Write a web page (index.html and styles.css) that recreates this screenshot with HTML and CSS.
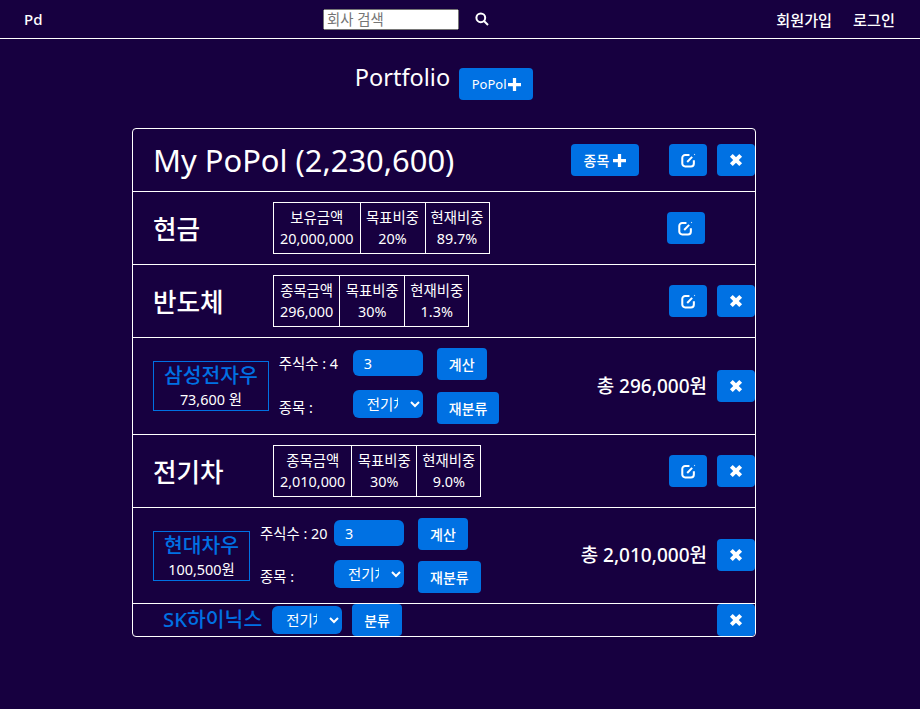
FILE: index.html
```html
<!DOCTYPE html>
<html lang="ko">
<head>
<meta charset="UTF-8">
<meta name="viewport" content="width=device-width, initial-scale=1.0">
<title>Portfolio</title>
<link rel="stylesheet" href="styles.css">
</head>
<body>
<nav class="navbar">
  <a class="brand">Pd</a>
  <form class="search">
    <input class="search-input" type="text" placeholder="회사 검색">
    <svg class="search-icon" viewBox="0 0 14 14"><circle cx="5.8" cy="5.8" r="4.4"/><path d="M9 9l4 4"/></svg>
  </form>
  <div class="nav-links">
    <a>회원가입</a>
    <a>로그인</a>
  </div>
</nav>

<div class="page-title">
  <h1>Portfolio</h1>
  <button class="btn btn-popol">PoPol<svg class="icon-plus" viewBox="0 0 12 12"><path d="M4.5 0h3v4.5H12v3H7.5V12h-3V7.5H0v-3h4.5z"/></svg></button>
</div>

<div class="card">
  <!-- portfolio header -->
  <div class="row row-top">
    <div class="popol-name">My PoPol (2,230,600)</div>
    <button class="btn btn-add">종목 <svg class="icon-plus" viewBox="0 0 12 12"><path d="M4.5 0h3v4.5H12v3H7.5V12h-3V7.5H0v-3h4.5z"/></svg></button>
    <button class="btn btn-icon btn-gap"><svg class="icon-edit" viewBox="0 0 14 14"><path d="M12 6.8v3a2.7 2.7 0 0 1-2.7 2.7H3.9a2.7 2.7 0 0 1-2.7-2.7V4.6a2.7 2.7 0 0 1 2.7-2.7h4"/><path d="M5.8 8.4l4.6-4.8"/><path class="edit-tip" d="M12.4 1.7l.5-.5"/></svg></button>
    <button class="btn btn-icon"><svg class="icon-x" viewBox="0 0 12 12"><path d="M2 2l8 8M10 2l-8 8"/></svg></button>
  </div>

  <!-- cash -->
  <div class="row row-group">
    <div class="group-name">현금</div>
    <table class="stats">
      <tr><td>보유금액<br>20,000,000</td><td>목표비중<br>20%</td><td>현재비중<br>89.7%</td></tr>
    </table>
    <button class="btn btn-icon btn-cash"><svg class="icon-edit" viewBox="0 0 14 14"><path d="M12 6.8v3a2.7 2.7 0 0 1-2.7 2.7H3.9a2.7 2.7 0 0 1-2.7-2.7V4.6a2.7 2.7 0 0 1 2.7-2.7h4"/><path d="M5.8 8.4l4.6-4.8"/><path class="edit-tip" d="M12.4 1.7l.5-.5"/></svg></button>
  </div>

  <!-- semiconductor -->
  <div class="row row-group">
    <div class="group-name">반도체</div>
    <table class="stats">
      <tr><td>종목금액<br>296,000</td><td>목표비중<br>30%</td><td>현재비중<br>1.3%</td></tr>
    </table>
    <button class="btn btn-icon btn-gap btn-push"><svg class="icon-edit" viewBox="0 0 14 14"><path d="M12 6.8v3a2.7 2.7 0 0 1-2.7 2.7H3.9a2.7 2.7 0 0 1-2.7-2.7V4.6a2.7 2.7 0 0 1 2.7-2.7h4"/><path d="M5.8 8.4l4.6-4.8"/><path class="edit-tip" d="M12.4 1.7l.5-.5"/></svg></button>
    <button class="btn btn-icon"><svg class="icon-x" viewBox="0 0 12 12"><path d="M2 2l8 8M10 2l-8 8"/></svg></button>
  </div>

  <div class="row row-stock">
    <div class="stock-box">
      <div class="stock-name">삼성전자우</div>
      <div class="stock-price">73,600 원</div>
    </div>
    <div class="stock-form">
      <span class="stock-label">주식수 : 4</span>
      <input class="field field-input" type="text" value="3">
      <button class="btn btn-text">계산</button>
      <span class="stock-label">종목 :</span>
      <select class="field field-select"><option>전기차</option></select>
      <button class="btn btn-text">재분류</button>
    </div>
    <div class="stock-total">총 296,000원</div>
    <button class="btn btn-icon"><svg class="icon-x" viewBox="0 0 12 12"><path d="M2 2l8 8M10 2l-8 8"/></svg></button>
  </div>

  <!-- EV -->
  <div class="row row-group">
    <div class="group-name">전기차</div>
    <table class="stats">
      <tr><td>종목금액<br>2,010,000</td><td>목표비중<br>30%</td><td>현재비중<br>9.0%</td></tr>
    </table>
    <button class="btn btn-icon btn-gap btn-push"><svg class="icon-edit" viewBox="0 0 14 14"><path d="M12 6.8v3a2.7 2.7 0 0 1-2.7 2.7H3.9a2.7 2.7 0 0 1-2.7-2.7V4.6a2.7 2.7 0 0 1 2.7-2.7h4"/><path d="M5.8 8.4l4.6-4.8"/><path class="edit-tip" d="M12.4 1.7l.5-.5"/></svg></button>
    <button class="btn btn-icon"><svg class="icon-x" viewBox="0 0 12 12"><path d="M2 2l8 8M10 2l-8 8"/></svg></button>
  </div>

  <div class="row row-stock row-stock-last">
    <div class="stock-box">
      <div class="stock-name">현대차우</div>
      <div class="stock-price">100,500원</div>
    </div>
    <div class="stock-form">
      <span class="stock-label">주식수 : 20</span>
      <input class="field field-input" type="text" value="3">
      <button class="btn btn-text">계산</button>
      <span class="stock-label">종목 :</span>
      <select class="field field-select"><option>전기차</option></select>
      <button class="btn btn-text">재분류</button>
    </div>
    <div class="stock-total">총 2,010,000원</div>
    <button class="btn btn-icon"><svg class="icon-x" viewBox="0 0 12 12"><path d="M2 2l8 8M10 2l-8 8"/></svg></button>
  </div>

  <!-- not classified yet -->
  <div class="row row-new">
    <div class="new-name">SK하이닉스</div>
    <select class="field field-select"><option>전기차</option></select>
    <button class="btn btn-text">분류</button>
    <button class="btn btn-icon btn-push"><svg class="icon-x" viewBox="0 0 12 12"><path d="M2 2l8 8M10 2l-8 8"/></svg></button>
  </div>
</div>
</body>
</html>
```

FILE: styles.css
```css
* {
  box-sizing: border-box;
}
body {
  margin: 0;
  background: #170040;
  color: #fff;
  font-family: "Noto Sans", "Noto Sans CJK KR", sans-serif;
  font-size: 16px;
}
.navbar {
  display: grid;
  grid-template-columns: 299px auto 1fr;
  align-items: center;
  height: 39px;
  padding: 0 25px 0 24px;
  border-bottom: 1px solid #fff;
}
.brand {
  font-size: 15px;
  font-weight: 500;
}
.search {
  display: flex;
  align-items: center;
  gap: 16px;
}
.search-input {
  width: 136px;
  height: 21px;
  padding: 1px 2px;
  font-family: inherit;
  font-size: 14.4px;
}
.search-icon {
  width: 14px;
  height: 14px;
  fill: none;
  stroke: #fff;
  stroke-width: 2;
}
.nav-links {
  display: flex;
  justify-content: flex-end;
  gap: 21px;
  font-size: 15.2px;
  font-weight: 500;
}
.page-title {
  display: flex;
  justify-content: center;
  gap: 9px;
  padding: 20px 32px 0 0;
  height: 89px;
}
.page-title h1 {
  margin: 0;
  font-size: 23.5px;
  font-weight: 400;
  line-height: 36px;
}
.btn {
  display: inline-flex;
  align-items: center;
  justify-content: center;
  padding: 0;
  border: none;
  border-radius: 4px;
  background: #0071e3;
  color: #fff;
  font-family: inherit;
  font-size: 14px;
  font-weight: 500;
  height: 32px;
}
.btn-popol {
  width: 74px;
  margin-top: 9px;
  font-size: 13px;
  font-weight: 400;
}
.icon-plus {
  width: 13px;
  height: 13px;
  fill: #fff;
}
.btn-popol .icon-plus {
  margin-left: 1px;
}
.btn-add .icon-plus {
  margin-left: 4px;
}
.btn-add {
  width: 68px;
  margin-left: auto;
  margin-right: 30px;
}
.btn-icon {
  width: 38px;
  flex: none;
}
.btn-gap {
  margin-right: 10px;
}
.btn-push {
  margin-left: auto;
}
.btn-cash {
  margin-left: 177px;
}
.icon-edit {
  width: 15px;
  height: 15px;
  fill: none;
  stroke: #fff;
  stroke-width: 1.9;
}
.icon-edit .edit-tip {
  stroke-width: 1.2;
}
.icon-x {
  width: 14px;
  height: 14px;
  fill: none;
  stroke: #fff;
  stroke-width: 3.4;
}
.card {
  width: 624px;
  margin-left: 132px;
  border: 1px solid #fff;
  border-radius: 4px;
}
.row {
  display: flex;
  align-items: center;
  padding-left: 20px;
  border-bottom: 1px solid #fff;
}
.row:last-child {
  border-bottom: none;
}
.row-top {
  height: 63px;
}
.popol-name {
  font-size: 30.9px;
}
.row-group {
  height: 73px;
}
.group-name {
  width: 120px;
  flex: none;
  font-size: 25.6px;
  font-weight: 500;
}
.stats {
  border-collapse: collapse;
  font-size: 14.4px;
  line-height: 21px;
  text-align: center;
}
.stats td {
  padding: 4px 5.5px;
  border: 1px solid #fff;
  white-space: nowrap;
}
.stats td:first-child {
  padding: 4px 6px;
}
.stats td:last-child {
  padding: 4px 5px;
}
.row-stock {
  height: 97px;
}
.row-stock-last {
  height: 96px;
}
.row-stock-last .stock-form {
  row-gap: 11px;
}
.row-stock-last .stock-form .field-select {
  margin-top: -1px;
}
.row-stock-last .btn-icon {
  margin-bottom: 1px;
}
.stock-box {
  flex: none;
  height: 50px;
  padding: 0 10px;
  border: 1px solid #0071e3;
  text-align: center;
}
.stock-name {
  color: #0071e3;
  font-size: 20.4px;
  font-weight: 500;
  line-height: 27px;
}
.stock-price {
  font-size: 14.4px;
  line-height: 21px;
}
.stock-form {
  display: grid;
  grid-template-columns: 74px 70px auto;
  row-gap: 12px;
  align-items: center;
  justify-items: start;
  margin-left: 10px;
  font-size: 14.4px;
}
.stock-form .btn {
  margin-left: 14px;
}
.stock-label {
  margin-bottom: 3px;
}
.field {
  width: 70px;
  padding: 0 11px;
  border: none;
  border-radius: 6px;
  background: #0071e3;
  color: #fff;
  font-family: inherit;
  font-size: 14.4px;
}
.field-input {
  height: 26px;
  margin-bottom: 2px;
}
.field-select {
  height: 28px;
  padding: 0 9px 0 10px;
}
.stock-form .field-select {
  align-self: start;
  margin-top: -2px;
}
.btn-text {
  padding: 0 12px;
}
.stock-total {
  margin-left: auto;
  margin-right: 10px;
  margin-bottom: 3px;
  font-size: 19px;
  font-weight: 500;
}
.row-new {
  height: 32px;
  padding-left: 30px;
  align-items: flex-start;
}
.row-new .field-select {
  margin-top: 2px;
}
.new-name {
  color: #0071e3;
  font-size: 20.4px;
  font-weight: 500;
  line-height: 31px;
  margin-right: 10px;
}
.row-new .btn-text {
  margin-left: 10px;
}
```
